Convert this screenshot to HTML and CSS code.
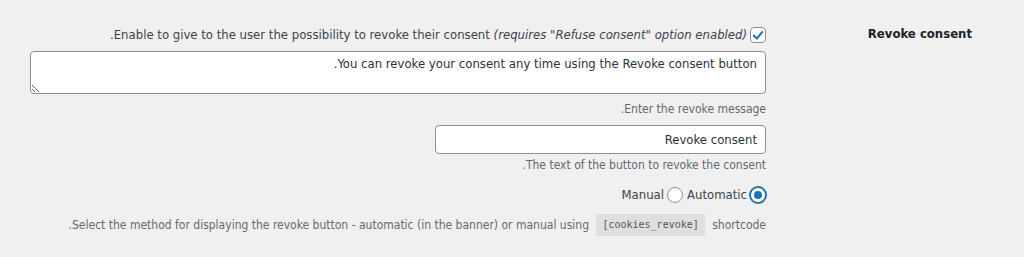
FILE: index.html
```html
<!DOCTYPE html>
<html lang="en" dir="rtl">
<head>
    <meta charset="UTF-8">
    <title>Revoke consent</title>
    <link rel="stylesheet" href="styles.css">
</head>
<body>
    <div class="form-row">
        <div class="row-title">Revoke consent</div>
        <div class="row-field">
            <label class="check-line">
                <input type="checkbox" class="check" checked>
                <span>Enable to give to the user the possibility to revoke their consent <i>(requires "Refuse consent" option enabled)</i>.</span>
            </label>
            <textarea class="message" rows="2">You can revoke your consent any time using the Revoke consent button.</textarea>
            <p class="description desc-message">Enter the revoke message.</p>
            <input type="text" class="regular-text" value="Revoke consent">
            <p class="description desc-button">The text of the button to revoke the consent.</p>
            <div class="radios">
                <label><input type="radio" class="radio" name="revoke_method" checked>Automatic</label>
                <label><input type="radio" class="radio" name="revoke_method">Manual</label>
            </div>
            <p class="description desc-method">Select the method for displaying the revoke button - automatic (in the banner) or manual using <code>[cookies_revoke]</code> shortcode.</p>
        </div>
    </div>
</body>
</html>
```

FILE: styles.css
```css
body {
    margin: 0;
    background-color: #f0f0f1;
    color: #3c434a;
    font-family: "DejaVu Sans", "Liberation Sans", sans-serif;
    font-stretch: condensed;
    font-size: 13px;
    line-height: 18px;
}

.form-row {
    display: flex;
    padding: 0 52px 0 30px;
}

.row-title {
    width: 206px;
    flex: none;
    padding-top: 25px;
    font-weight: bold;
    font-size: 13px;
    color: #1d2327;
    text-align: right;
}

.row-field {
    flex: 1;
    padding-top: 26px;
    text-align: right;
}

.check-line {
    display: flex;
    align-items: center;
    gap: 3px;
}

.check {
    appearance: none;
    position: relative;
    flex: none;
    width: 16px;
    height: 16px;
    margin: 0;
    border: 1px solid #8c8f94;
    border-radius: 4px;
    background: white;
    box-sizing: border-box;
}

.check:checked::before {
    content: "";
    position: absolute;
    left: 4px;
    top: 1px;
    width: 4px;
    height: 8px;
    border-right: 2px solid #2271b1;
    border-bottom: 2px solid #2271b1;
    transform: rotate(40deg);
}

.message {
    display: block;
    box-sizing: border-box;
    width: 100%;
    height: 43px;
    margin: 7px 0 0;
    padding: 3px 8px;
    border: 1px solid #8c8f94;
    border-radius: 4px;
    background: white;
    color: #2c3338;
    font: inherit;
    line-height: 18px;
}

.description {
    margin: 0;
    color: #646970;
    font-size: 12px;
}

.desc-message {
    margin-top: 6px;
}

.regular-text {
    display: block;
    box-sizing: border-box;
    width: 331px;
    height: 29px;
    margin: 7px 0 0;
    padding: 0 8px;
    border: 1px solid #8c8f94;
    border-radius: 4px;
    background: white;
    color: #2c3338;
    font: inherit;
}

.desc-button {
    margin-top: 2px;
}

.radios {
    display: flex;
    gap: 4px;
    margin-top: 12px;
}

.radios label {
    display: flex;
    align-items: center;
    gap: 3px;
}

.radio {
    appearance: none;
    position: relative;
    width: 16px;
    height: 16px;
    margin: 0;
    border: 1px solid #8c8f94;
    border-radius: 50%;
    background: white;
    box-sizing: border-box;
}

.radio:checked {
    border-color: #2271b1;
    box-shadow: 0 0 0 1px #2271b1;
}

.radio:checked::before {
    content: "";
    position: absolute;
    left: 3px;
    top: 3px;
    width: 8px;
    height: 8px;
    border-radius: 50%;
    background: #2271b1;
}

.desc-method {
    margin-top: 10px;
}

code {
    display: inline-block;
    padding: 2px 6px;
    margin: 0 4px;
    line-height: 18px;
    vertical-align: middle;
    background: rgba(0, 0, 0, 0.07);
    font-family: "DejaVu Sans Mono", "Liberation Mono", monospace;
    font-stretch: normal;
    font-size: 10px;
    color: #50575e;
}
```
